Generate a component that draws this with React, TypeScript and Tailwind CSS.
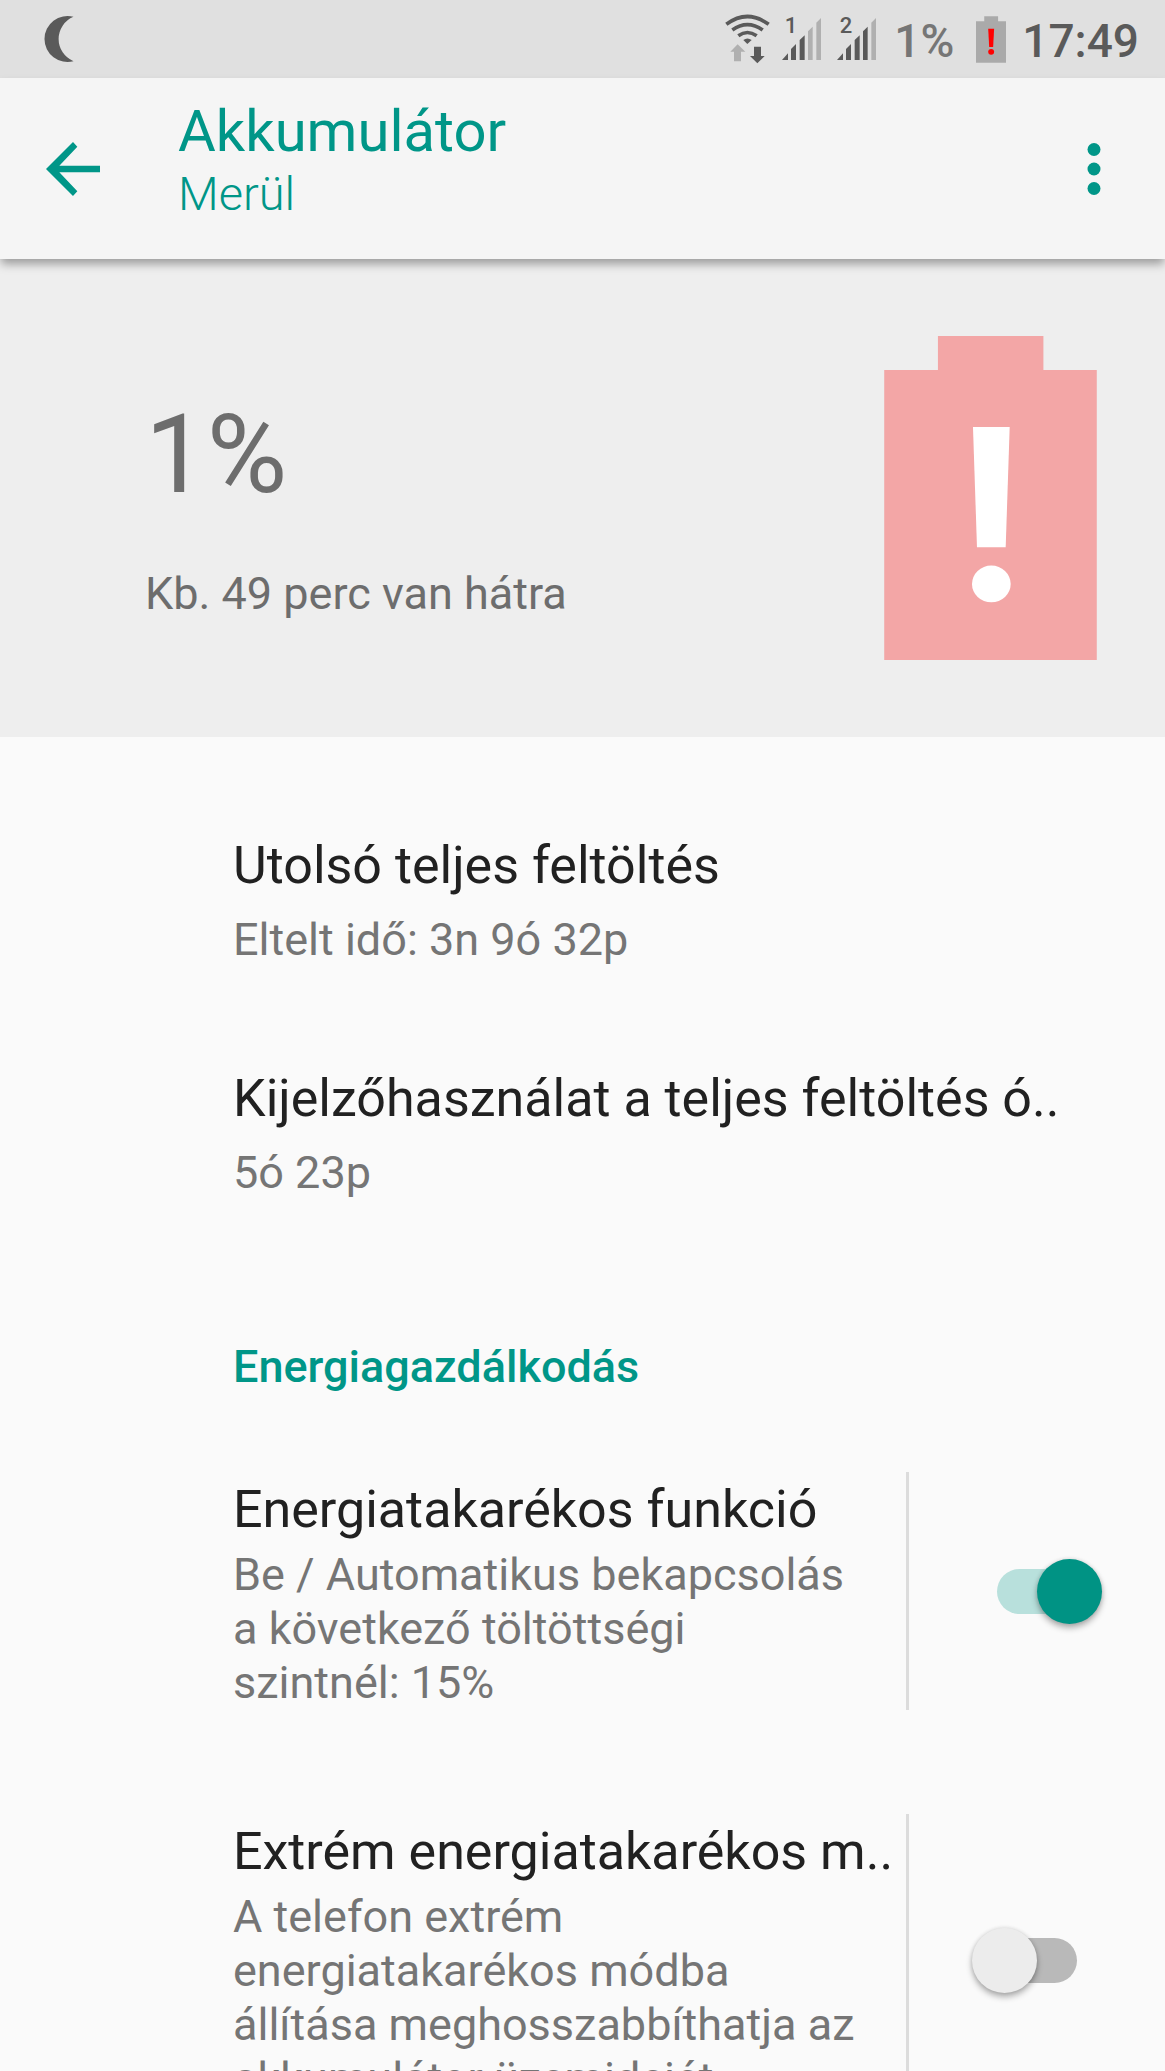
import React, { useState } from 'react'

interface InfoItem {
  title: string
  detail: string
}

interface PowerOption {
  id: string
  title: string
  detail: string
}

const infoItems: InfoItem[] = [
  { title: 'Utolsó teljes feltöltés', detail: 'Eltelt idő: 3n 9ó 32p' },
  { title: 'Kijelzőhasználat a teljes feltöltés ó..', detail: '5ó 23p' },
]

const powerOptions: PowerOption[] = [
  {
    id: 'saver',
    title: 'Energiatakarékos funkció',
    // the value stays on the same line as its label
    detail: 'Be / Automatikus bekapcsolás a következő töltöttségi szintnél:\u00a015%',
  },
  {
    id: 'extreme',
    title: 'Extrém energiatakarékos m..',
    detail: 'A telefon extrém energiatakarékos módba állítása meghosszabbíthatja az akkumulátor üzemidejét',
  },
]

const bars = [
  'M0 126L18 106V126Z',
  'M27 93L42 78V126H27Z',
  'M53 66L68 52V126H53Z',
  'M78 40L92 26V126H78Z',
  'M103 14L117 0V126H103Z',
]

function MoonIcon() {
  return (
    <svg viewBox="0 0 30 48" className="h-12 w-[30px]" fill="#5a5a5a">
      <path d="M29.5 1.8A23 23 0 1 0 29.5 46.2A24 24 0 0 1 29.5 1.8Z" />
    </svg>
  )
}

function WifiIcon() {
  return (
    <svg viewBox="75 40 135 150" className="h-[50px] w-[45px]" fill="#5a5a5a">
      <g fill="none" stroke="#5a5a5a" strokeWidth="11">
        <path d="M79 71Q142 24 206 71" />
        <path d="M97 88Q142 56 188 88" />
        <path d="M115 105Q142 86 170 105" />
      </g>
      <path d="M130 118Q142 109 155 118L142 130Z" />
      <path fill="#b0b0b0" d="M113 131L136 153H123V182H102V153H91Z" />
      <path d="M162 138H183V166H194L172 188L150 166H162Z" />
    </svg>
  )
}

function SignalIcon({ sim, level }: { sim: string; level: number }) {
  return (
    <svg viewBox="0 0 117 126" className="h-[42px] w-[39px] overflow-visible">
      {bars.map((d, i) => (
        <path key={d} d={d} fill={i < level ? '#5a5a5a' : '#b0b0b0'} />
      ))}
      <text x="8" y="45" fontSize="66" fontWeight="500" fill="#5a5a5a">{sim}</text>
    </svg>
  )
}

function SmallBattery() {
  return (
    <svg viewBox="140 45 91 141" className="h-[47px] w-[30px]">
      <path fill="#aaaaaa" d="M165 45H207V60H231V186H140V60H165Z" />
      <path fill="#ff0000" d="M177 83H195L192 138H180Z" />
      <circle cx="186" cy="153" r="9" fill="#ff0000" />
    </svg>
  )
}

function BigBattery() {
  return (
    <svg viewBox="72 79 637 971" className="h-[324px] w-[213px] shrink-0">
      <path fill="#f3a6a6" d="M233 79H549V181H709V1050H72V181H233Z" />
      <path fill="#ffffff" d="M338 352H448L436 712H350Z" />
      <ellipse cx="393" cy="822" rx="58" ry="55" fill="#ffffff" />
    </svg>
  )
}

function Switch({ id, checked, onChange }: { id: string; checked: boolean; onChange: () => void }) {
  return (
    <span className="relative flex h-[65px] w-[130px] items-center justify-center">
      <input
        id={id}
        type="checkbox"
        role="switch"
        checked={checked}
        onChange={onChange}
        className="peer absolute inset-0 z-10 cursor-pointer appearance-none"
      />
      <span className="h-[45px] w-20 rounded-full bg-[#b9b9b9] peer-checked:bg-[#b8e0dc]" />
      <span className="absolute top-0 left-0 size-[65px] rounded-full bg-[#ececec] shadow-[0_4px_6px_rgba(0,0,0,0.3),0_0_4px_rgba(0,0,0,0.12)] peer-checked:left-[65px] peer-checked:bg-[#009384]" />
    </span>
  )
}

export default function App() {
  const [enabled, setEnabled] = useState<Record<string, boolean>>({ saver: true, extreme: false })

  const toggle = (id: string) => {
    setEnabled({ ...enabled, [id]: !enabled[id] })
  }

  return (
    <div className="flex h-screen flex-col overflow-hidden bg-[#fafafa] font-['Roboto',sans-serif]">
      {/* Status bar */}
      <div className="flex h-[78px] shrink-0 items-center justify-between bg-[#e0e0e0] pr-[26px] pl-11">
        <MoonIcon />
        <div className="flex items-center">
          <WifiIcon />
          <div className="ml-3 flex gap-4">
            <SignalIcon sim="1" level={3} />
            <SignalIcon sim="2" level={4} />
          </div>
          <span className="ml-[18px] pt-1 text-[46px] leading-[54px] font-medium text-[#767676]">1%</span>
          <span className="mr-4 ml-[22px]">
            <SmallBattery />
          </span>
          <span className="pt-1 text-[46px] leading-[54px] font-medium text-[#5a5a5a]">17:49</span>
        </div>
      </div>

      {/* App bar */}
      <header className="z-10 flex h-[181px] shrink-0 items-center bg-[#f5f5f5] pr-16 pl-[46px] text-[#009688] shadow-[0_6px_9px_-1px_rgba(0,0,0,0.35)]">
        <button type="button" aria-label="Vissza" className="cursor-pointer">
          <svg viewBox="138 424 162 162" className="size-[54px]" fill="currentColor">
            <path d="M300 495H178L232 438L219 424L138 505L219 586L232 572L178 515H300Z" />
          </svg>
        </button>
        <div className="ml-[78px] flex-1 self-start pt-5">
          <h1 className="text-[58px] leading-[66px]">Akkumulátor</h1>
          <p className="text-[47px] leading-[60px] font-light">Merül</p>
        </div>
        <button type="button" aria-label="További lehetőségek" className="cursor-pointer">
          <svg viewBox="0 0 14 54" className="h-[54px] w-[14px]" fill="currentColor">
            <circle cx="7" cy="7.5" r="6.5" />
            <circle cx="7" cy="27" r="6.5" />
            <circle cx="7" cy="46.5" r="6.5" />
          </svg>
        </button>
      </header>

      {/* Battery level */}
      <section className="flex shrink-0 justify-between bg-[#eeeeee] py-[77px] pr-[68px] pl-[145px] text-[#6d6d6d]">
        <div className="pt-[54px]">
          <p className="text-[110px] leading-[130px]">1%</p>
          <p className="mt-[47px] text-[45px] leading-[54px]">Kb. 49 perc van hátra</p>
        </div>
        <BigBattery />
      </section>

      <main className="min-h-0 flex-1 overflow-y-auto pt-12 pl-[233px] [scrollbar-width:none]">
        {infoItems.map((item) => (
          <div key={item.title} className="py-[51px]">
            <h2 className="text-[52px] leading-[60px] whitespace-nowrap text-[#212121]">{item.title}</h2>
            <p className="mt-[17px] text-[45px] leading-[54px] text-[#757575]">{item.detail}</p>
          </div>
        ))}

        <h2 className="pt-[89px] pb-[26px] text-[45px] leading-[54px] font-medium text-[#009688]">
          Energiagazdálkodás
        </h2>

        {powerOptions.map((option) => (
          <div key={option.id} className="flex py-[52px]">
            <label htmlFor={option.id} className="min-w-0 flex-1 cursor-pointer pt-2 pr-10">
              <span className="block text-[52px] leading-[60px] whitespace-nowrap text-[#212121]">{option.title}</span>
              <span className="mt-2 block text-[45px] leading-[54px] text-[#757575]">{option.detail}</span>
            </label>
            <div className="flex shrink-0 items-center border-l-3 border-[#dcdcdc] px-[63px]">
              <Switch id={option.id} checked={enabled[option.id]} onChange={() => toggle(option.id)} />
            </div>
          </div>
        ))}
      </main>
    </div>
  )
}
